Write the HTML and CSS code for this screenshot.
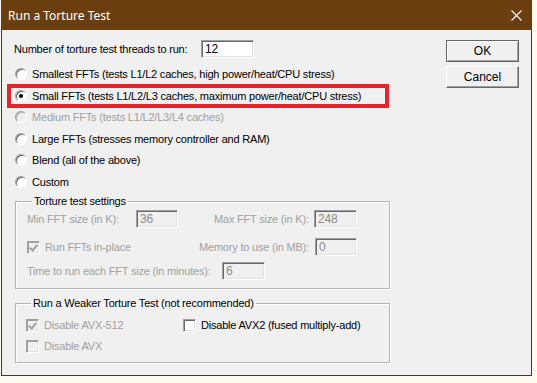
FILE: index.html
```html
<!DOCTYPE html>
<html lang="en">
  <head>
    <meta charset="UTF-8" />
    <title>Run a Torture Test</title>
    <link rel="stylesheet" href="styles.css">
  </head>
  <body>
    <div class="window">
      <div class="titlebar">
        <span class="title">Run a Torture Test</span>
        <svg class="close" width="11" height="11" viewBox="0 0 11 11">
          <path d="M0.5 0.5 L10.5 10.5 M10.5 0.5 L0.5 10.5" stroke="#fff" stroke-width="1.1" fill="none" />
        </svg>
      </div>

      <div class="client">
        <div class="main">
          <div class="threads">
            <span class="threads-label">Number of torture test threads to run:</span>
            <span class="field threads-field">12</span>
          </div>

          <div class="radio-row"><span class="radio"></span>Smallest FFTs (tests L1/L2 caches, high power/heat/CPU stress)</div>
          <div class="radio-row highlight"><span class="radio checked"></span>Small FFTs (tests L1/L2/L3 caches, maximum power/heat/CPU stress)</div>
          <div class="radio-row disabled"><span class="radio"></span>Medium FFTs (tests L1/L2/L3/L4 caches)</div>
          <div class="radio-row"><span class="radio"></span>Large FFTs (stresses memory controller and RAM)</div>
          <div class="radio-row"><span class="radio"></span>Blend (all of the above)</div>
          <div class="radio-row"><span class="radio"></span>Custom</div>

          <fieldset class="group settings">
            <legend>Torture test settings</legend>
            <div class="row row-fft">
              <span class="lbl min-lbl">Min FFT size (in K):</span>
              <span class="field disabled w42">36</span>
              <span class="lbl max-lbl">Max FFT size (in K):</span>
              <span class="field disabled w43">248</span>
            </div>
            <div class="row row-mem">
              <span class="check-item inplace"><span class="checkbox checked off"></span>Run FFTs in-place</span>
              <span class="lbl mem-lbl">Memory to use (in MB):</span>
              <span class="field disabled w42">0</span>
            </div>
            <div class="row row-time">
              <span class="lbl time-lbl">Time to run each FFT size (in minutes):</span>
              <span class="field disabled w43">6</span>
            </div>
          </fieldset>

          <fieldset class="group weaker">
            <legend>Run a Weaker Torture Test (not recommended)</legend>
            <div class="row check-row">
              <span class="check-item avx512 lbl"><span class="checkbox checked off"></span>Disable AVX-512</span>
              <span class="check-item on"><span class="checkbox"></span>Disable AVX2 (fused multiply-add)</span>
            </div>
            <div class="row check-row second">
              <span class="check-item lbl"><span class="checkbox off"></span>Disable AVX</span>
            </div>
          </fieldset>
        </div>

        <div class="buttons">
          <button class="btn default">OK</button>
          <button class="btn">Cancel</button>
        </div>
      </div>
    </div>
  </body>
</html>
```

FILE: styles.css
```css
/* Reset */
body,
fieldset,
legend {
  margin: 0;
  padding: 0;
}

body {
  background-color: #fdf9ee;
  font-family: "Liberation Sans", Arial, sans-serif;
  font-size: 11px;
  letter-spacing: -0.2px;
  white-space: nowrap;
  color: #000;
}

/* Dialog window */
.window {
  margin-left: 1px;
  width: 529px;
  height: 375px;
  border-left: 1px solid #3a3a3a;
  border-right: 1px solid #3a3a3a;
  border-bottom: 1px solid #3a3a3a;
  background-color: #f0f0f0;
  display: flex;
  flex-direction: column;
}

.titlebar {
  height: 30px;
  margin-left: -1px;
  margin-right: -1px;
  background-color: #6b3e10;
  display: flex;
  align-items: center;
  padding: 0 10px 0 7px;
}

.title {
  font-family: "Noto Sans", "Open Sans", sans-serif;
  font-size: 12px;
  letter-spacing: 0;
  color: #fff;
  flex: 1;
}

.close {
  display: block;
}

.client {
  flex: 1;
  display: flex;
  padding: 10px 12px 0 12px;
}

.main {
  width: 376px;
}

/* Threads row */
.threads {
  display: flex;
  align-items: center;
  height: 18px;
}

.threads-label {
  width: 187px;
}

.field {
  display: block;
  box-sizing: border-box;
  height: 18px;
  line-height: 16px;
  padding-left: 3px;
  background-color: #fff;
  border-top: 1px solid #a0a0a0;
  border-left: 1px solid #a0a0a0;
  border-right: 1px solid #fff;
  border-bottom: 1px solid #fff;
  box-shadow: inset 1px 1px #696969, inset -1px -1px #e3e3e3;
  font-size: 12px;
}

.threads-field {
  width: 53px;
}

.field.disabled {
  background-color: #f0f0f0;
  color: #8c8c8c;
}

.w42 {
  width: 42px;
}

.w43 {
  width: 43px;
}

/* Radio buttons */
.radio-row {
  position: relative;
  display: flex;
  align-items: center;
  height: 21.5px;
  margin-left: 1px;
}

.threads + .radio-row {
  margin-top: 5.25px;
}

.radio {
  position: relative;
  box-sizing: border-box;
  width: 12px;
  height: 12px;
  margin-right: 5px;
  border-radius: 50%;
  background-color: #fff;
  border: 1px solid;
  border-color: #a0a0a0 #fff #fff #a0a0a0;
  box-shadow: inset 1px 1px #696969;
}

.radio.checked::after {
  content: "";
  position: absolute;
  left: 3px;
  top: 3px;
  width: 4px;
  height: 4px;
  border-radius: 50%;
  background-color: #000;
}

.radio-row.disabled {
  color: #a0a0a0;
}

.radio-row.disabled .radio {
  background-color: #f0f0f0;
  box-shadow: inset 1px 1px #b4b4b4;
}

/* Red annotation box */
.highlight::after {
  content: "";
  position: absolute;
  left: -8px;
  right: 1px;
  top: -1px;
  bottom: -2px;
  border: 4px solid #e3242b;
}

/* Group boxes */
.group {
  margin-left: 1px;
  width: 375px;
  box-sizing: border-box;
  border: 1px solid #b4b4b4;
  box-shadow: inset 1px 1px #fff, 1px 1px #fff;
}

.group legend {
  margin-left: 5px;
  padding: 0 2px;
  line-height: 14px;
}

.settings {
  margin-top: 2px;
  padding: 2px 0 8px 11px;
}

.weaker {
  margin-top: 7px;
  padding: 7px 0 8px 10px;
}

.row {
  display: flex;
  align-items: center;
  height: 18px;
}

.row-mem {
  margin-top: 10px;
}

.row-time {
  margin-top: 6px;
}

.lbl {
  color: #a0a0a0;
}

.min-lbl {
  width: 109px;
}

.max-lbl {
  width: 100px;
  margin-left: 36px;
}

.mem-lbl {
  width: 116px;
}

.time-lbl {
  width: 195px;
}

/* Check boxes */
.check-item {
  display: flex;
  align-items: center;
  color: #a0a0a0;
}

.check-item.on {
  color: #000;
}

.inplace {
  width: 172px;
}

.avx512 {
  width: 157px;
}

.check-row {
  height: 16px;
}

.check-row.second {
  margin-top: 5px;
}

.checkbox {
  position: relative;
  box-sizing: border-box;
  width: 13px;
  height: 13px;
  margin-right: 5px;
  background-color: #fff;
  border: 1px solid;
  border-color: #a0a0a0 #fff #fff #a0a0a0;
  box-shadow: inset 1px 1px #696969, inset -1px -1px #e3e3e3;
}

.checkbox.off {
  background-color: #f0f0f0;
  box-shadow: inset 1px 1px #a0a0a0, inset -1px -1px #e3e3e3;
}

.checkbox.checked::after {
  content: "";
  position: absolute;
  left: 3px;
  top: 1px;
  width: 3px;
  height: 6px;
  border-right: 2px solid #a0a0a0;
  border-bottom: 2px solid #a0a0a0;
  transform: rotate(40deg);
}

/* Buttons */
.buttons {
  margin-left: auto;
  width: 73px;
  display: flex;
  flex-direction: column;
  gap: 4px;
}

.btn {
  box-sizing: border-box;
  width: 73px;
  height: 22px;
  padding: 0;
  font-family: "Liberation Sans", Arial, sans-serif;
  font-size: 12px;
  color: #000;
  background-color: #f0f0f0;
  border: 1px solid;
  border-color: #fff #696969 #696969 #fff;
  box-shadow: inset -1px -1px #a0a0a0;
}

.btn.default {
  border: 1px solid #646464;
  box-shadow: inset 1px 1px #fff, inset -1px -1px #a0a0a0;
}
```
